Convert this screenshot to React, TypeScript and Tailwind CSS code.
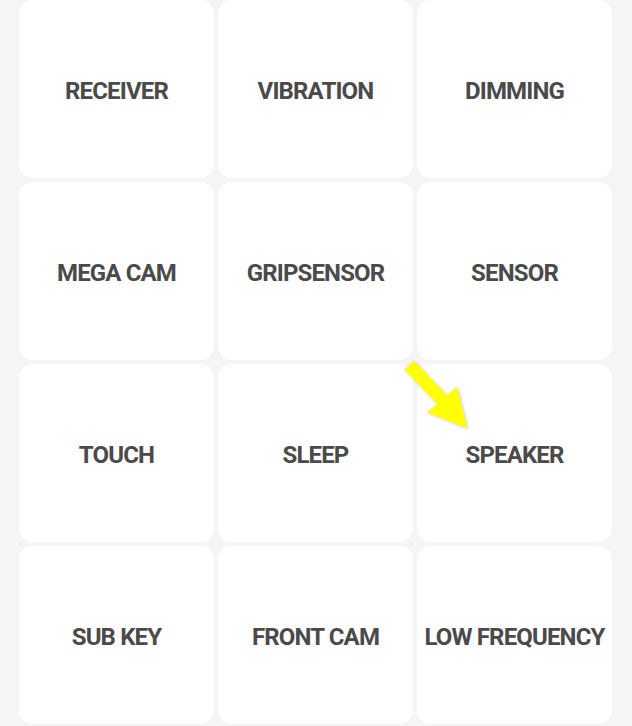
const tests = [
  "RECEIVER",
  "VIBRATION",
  "DIMMING",
  "MEGA CAM",
  "GRIPSENSOR",
  "SENSOR",
  "TOUCH",
  "SLEEP",
  "SPEAKER",
  "SUB KEY",
  "FRONT CAM",
  "LOW FREQUENCY",
];

export default function App() {
  return (
    <div className="relative h-[726px] w-[632px] overflow-hidden bg-[#f5f5f5]">
      <div className="grid grid-cols-3 gap-1 pl-[19px] pr-[20px]">
        {tests.map((name) => (
          <button
            key={name}
            className="flex h-[178px] items-center justify-center whitespace-nowrap rounded-[14px] bg-white pt-[3px] text-[24px] font-bold tracking-[-0.85px] text-[#4a4a4a]"
            style={{ fontFamily: "Roboto, 'Liberation Sans', sans-serif" }}
          >
            {name}
          </button>
        ))}
      </div>

      {/* pointer arrow */}
      <svg
        className="pointer-events-none absolute left-0 top-0"
        width="632"
        height="726"
        viewBox="0 0 632 726"
      >
        <defs>
          <filter id="shade" x="-20%" y="-20%" width="140%" height="140%">
            <feDropShadow dx="1" dy="1" stdDeviation="1.5" floodColor="#000" floodOpacity="0.25" />
          </filter>
        </defs>
        <polygon
          points="413.7,360.6 446.7,395.1 457,387 467,428 427,412 437.3,403.9 404.3,369.4"
          fill="#ffff00"
          filter="url(#shade)"
        />
      </svg>
    </div>
  );
}
